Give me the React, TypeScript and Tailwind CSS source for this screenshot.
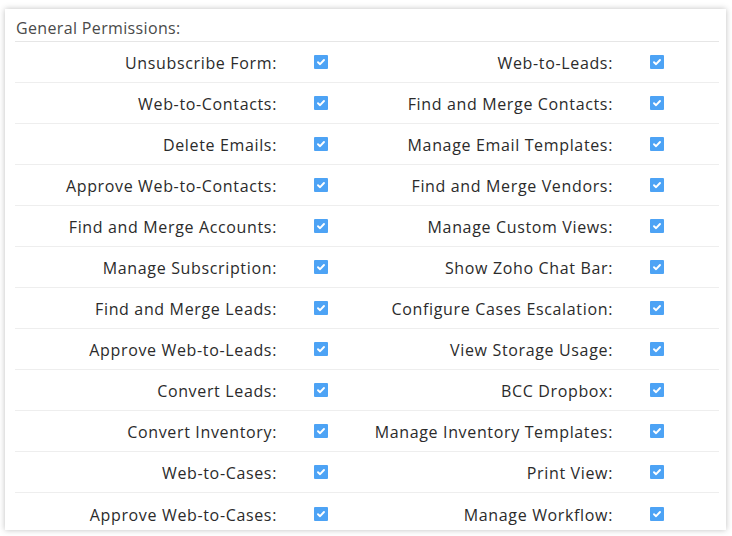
import React from "react";

const rows: [string, string][] = [
  ["Unsubscribe Form:", "Web-to-Leads:"],
  ["Web-to-Contacts:", "Find and Merge Contacts:"],
  ["Delete Emails:", "Manage Email Templates:"],
  ["Approve Web-to-Contacts:", "Find and Merge Vendors:"],
  ["Find and Merge Accounts:", "Manage Custom Views:"],
  ["Manage Subscription:", "Show Zoho Chat Bar:"],
  ["Find and Merge Leads:", "Configure Cases Escalation:"],
  ["Approve Web-to-Leads:", "View Storage Usage:"],
  ["Convert Leads:", "BCC Dropbox:"],
  ["Convert Inventory:", "Manage Inventory Templates:"],
  ["Web-to-Cases:", "Print View:"],
  ["Approve Web-to-Cases:", "Manage Workflow:"],
];

function Check() {
  return (
    <div className="w-[14px] h-[14px] bg-[#4da3f5] flex items-center justify-center rounded-[1px]">
      <svg width="10" height="10" viewBox="0 0 10 10">
        <path d="M2 5.2 L4.1 7.2 L8 3" stroke="white" strokeWidth="1.9" fill="none" strokeLinecap="round" strokeLinejoin="round" />
      </svg>
    </div>
  );
}

export default function App() {
  return (
    <div className="w-[732px] h-[536px] bg-white pt-[9px] pl-[5px]" style={{ fontFamily: "'Open Sans', sans-serif" }}>
      <div className="w-[721px] h-[521px] bg-white shadow-[0_0_6px_rgba(0,0,0,0.25)] pl-[10px] overflow-hidden">
        <div className="w-[704px] h-[33px] border-b border-[#e6e6e6] flex items-end pb-[1px] pl-[1px] text-[16px] tracking-[0.35px] text-[#4a4a4a]">
          General Permissions:
        </div>
        {rows.map((r, i) => (
          <div key={i} className={`w-[704px] h-[41px] flex items-center text-[16px] tracking-[0.65px] text-[#2b2b2b] ${i < rows.length - 1 ? "border-b border-[#eeeeee]" : ""}`}>
            <div className="w-[262px] text-right whitespace-nowrap pt-[2px]">{r[0]}</div>
            <div className="w-[74px] pl-[37px]"><Check /></div>
            <div className="w-[262px] text-right whitespace-nowrap pt-[2px]">{r[1]}</div>
            <div className="pl-[37px]"><Check /></div>
          </div>
        ))}
      </div>
    </div>
  );
}
